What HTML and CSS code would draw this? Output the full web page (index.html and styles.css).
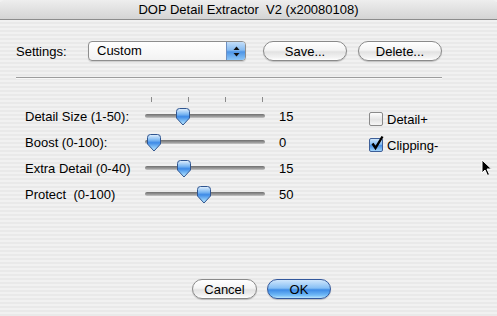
FILE: index.html
```html
<!DOCTYPE html>
<html lang="en">
<head>
    <meta charset="UTF-8">
    <title>DOP Detail Extractor</title>
    <link rel="stylesheet" href="styles.css">
</head>
<body>
    <div class="window">
        <div class="titlebar">DOP Detail Extractor&nbsp; V2 (x20080108)</div>

        <div class="content">
            <div class="settings-row">
                <span class="settings-label">Settings:</span>
                <div class="popup">
                    <span class="popup-text">Custom</span>
                    <span class="popup-arrows">
                        <svg width="7" height="11" viewBox="0 0 7 11">
                            <path d="M3.5 0.5 L6.5 4 L0.5 4 Z" fill="#111"/>
                            <path d="M0.5 7 L6.5 7 L3.5 10.5 Z" fill="#111"/>
                        </svg>
                    </span>
                </div>
                <button class="btn btn-save">Save...</button>
                <button class="btn btn-delete">Delete...</button>
            </div>

            <div class="separator"></div>

            <div class="params">
                <div class="sliders">
                    <div class="ticks-row">
                        <div class="ticks">
                            <span class="tick"></span>
                            <span class="tick"></span>
                            <span class="tick"></span>
                            <span class="tick"></span>
                        </div>
                    </div>

                    <div class="slider-row">
                        <span class="slider-label">Detail Size (1-50):</span>
                        <div class="track">
                            <svg class="thumb" style="left: 30px" width="16" height="18" viewBox="0 0 16 18"><use href="#thumb-shape"/></svg>
                        </div>
                        <span class="slider-value">15</span>
                    </div>
                    <div class="slider-row">
                        <span class="slider-label">Boost (0-100):</span>
                        <div class="track">
                            <svg class="thumb" style="left: 1px" width="16" height="18" viewBox="0 0 16 18"><use href="#thumb-shape"/></svg>
                        </div>
                        <span class="slider-value">0</span>
                    </div>
                    <div class="slider-row">
                        <span class="slider-label">Extra Detail (0-40)</span>
                        <div class="track">
                            <svg class="thumb" style="left: 31px" width="16" height="18" viewBox="0 0 16 18"><use href="#thumb-shape"/></svg>
                        </div>
                        <span class="slider-value">15</span>
                    </div>
                    <div class="slider-row">
                        <span class="slider-label">Protect&nbsp; (0-100)</span>
                        <div class="track">
                            <svg class="thumb" style="left: 51px" width="16" height="18" viewBox="0 0 16 18"><use href="#thumb-shape"/></svg>
                        </div>
                        <span class="slider-value">50</span>
                    </div>
                </div>

                <div class="checks">
                    <label class="check-row">
                        <span class="checkbox"></span>
                        <span class="check-text">Detail+</span>
                    </label>
                    <label class="check-row">
                        <span class="checkbox checked">
                            <svg class="checkmark" width="14" height="16" viewBox="0 0 14 16">
                                <path d="M2.5 8.5 L5.5 13 L12.5 1.5" fill="none" stroke="#000" stroke-width="2.4"/>
                            </svg>
                        </span>
                        <span class="check-text">Clipping-</span>
                    </label>
                </div>
            </div>

            <div class="actions">
                <button class="btn btn-cancel">Cancel</button>
                <button class="btn btn-ok">OK</button>
            </div>
        </div>

        <svg class="cursor" width="12" height="18" viewBox="0 0 12 18">
            <path d="M1 1 L1 14 L4 11 L6.5 16.5 L8.5 15.5 L6 10 L10.5 10 Z" fill="#000" stroke="#fff" stroke-width="1"/>
        </svg>

        <!-- shared slider thumb -->
        <svg width="0" height="0" class="defs">
            <defs>
                <linearGradient id="thumb-fill" x1="0" y1="0" x2="0" y2="1">
                    <stop offset="0" stop-color="#e4f1fd"/>
                    <stop offset="0.35" stop-color="#7ab6f2"/>
                    <stop offset="0.5" stop-color="#3d8ae6"/>
                    <stop offset="0.8" stop-color="#8cc8f8"/>
                    <stop offset="1" stop-color="#c9ecfd"/>
                </linearGradient>
                <path id="thumb-shape" d="M1.5 3.5 Q1.5 0.5 4.5 0.5 H11.5 Q14.5 0.5 14.5 3.5 V10 L8 17 L1.5 10 Z" fill="url(#thumb-fill)" stroke="#2f5590" stroke-width="1"/>
            </defs>
        </svg>
    </div>
</body>
</html>
```

FILE: styles.css
```css
body {
    margin: 0;
    font-family: "Liberation Sans", Arial, sans-serif;
    font-size: 13px;
    color: #000;
}

.window {
    position: relative;
    width: 497px;
    height: 316px;
    overflow: hidden;
    background: repeating-linear-gradient(to bottom, #f1f1f1 0, #f1f1f1 2px, #e9e9e9 2px, #e9e9e9 4px);
}

.titlebar {
    height: 19px;
    line-height: 20px;
    text-align: center;
    border-bottom: 1px solid #8c8c8c;
    border-radius: 5px 5px 0 0;
    background: linear-gradient(to bottom, #eeeeee, #d4d4d4);
}

.content {
    padding: 21px 0 0 16px;
}

/* settings row */
.settings-row {
    display: flex;
    align-items: center;
    height: 20px;
}

.settings-label {
    width: 72px;
}

.popup {
    display: flex;
    width: 156px;
    height: 18px;
    border: 1px solid #8e8e8e;
    border-radius: 4px;
    background: linear-gradient(to bottom, #ffffff, #f2f2f2);
    box-shadow: 0 1px 1px rgba(0, 0, 0, 0.15);
}

.popup-text {
    flex: 1;
    padding-left: 8px;
    line-height: 18px;
}

.popup-arrows {
    width: 18px;
    display: flex;
    align-items: center;
    justify-content: center;
    border-left: 1px solid #6d8fc2;
    border-radius: 0 3px 3px 0;
    background: linear-gradient(to bottom, #c3def9 0, #86bbf1 45%, #4e95e6 55%, #8cc6f8 100%);
}

.btn {
    height: 20px;
    padding: 0;
    border: 1px solid #8a8a8a;
    border-radius: 10px;
    font-family: inherit;
    font-size: 13px;
    color: #000;
    background: linear-gradient(to bottom, #ffffff 0, #f4f4f4 45%, #e2e2e2 55%, #f2f2f2 85%, #ffffff 100%);
    box-shadow: 0 1px 1px rgba(0, 0, 0, 0.2);
}

.btn-save {
    width: 84px;
    margin-left: 17px;
}

.btn-delete {
    width: 84px;
    margin-left: 11px;
}

.separator {
    width: 426px;
    height: 1px;
    margin-top: 16px;
    background: #9d9d9d;
    border-bottom: 1px solid #f8f8f8;
}

/* sliders */
.params {
    display: flex;
    margin-top: 18px;
}

.sliders {
    width: 304px;
    padding-left: 9px;
}

.ticks-row {
    height: 6px;
    padding-left: 120px;
}

.ticks {
    display: flex;
    justify-content: space-between;
    width: 112px;
    padding: 0 2px 0 6px;
}

.tick {
    width: 1px;
    height: 5px;
    background: #8a8a8a;
}

.slider-row {
    display: flex;
    align-items: center;
    height: 26px;
}

.slider-label {
    width: 120px;
}

.track {
    position: relative;
    width: 120px;
    height: 4px;
    border-radius: 2px;
    background: linear-gradient(to bottom, #6f6f6f, #9a9a9a 60%, #c8c8c8);
}

.thumb {
    position: absolute;
    top: -6px;
}

.slider-value {
    margin-left: 14px;
}

/* checkboxes */
.checks {
    padding-top: 9px;
    margin-left: 40px;
}

.check-row {
    display: flex;
    align-items: center;
    height: 26px;
}

.checkbox {
    position: relative;
    width: 12px;
    height: 12px;
    border: 1px solid #8a8a8a;
    border-radius: 2px;
    background: linear-gradient(to bottom, #fdfdfd, #e4e4e4 55%, #f6f6f6);
}

.checkbox.checked {
    border-color: #3e5f98;
    background: linear-gradient(to bottom, #cde5fb 0, #80b9f2 45%, #4790e6 55%, #a4d6fb 100%);
}

.checkmark {
    position: absolute;
    left: 0;
    top: -4px;
}

.check-text {
    margin-left: 4px;
}

/* bottom buttons */
.actions {
    display: flex;
    margin-top: 72px;
    padding-left: 176px;
}

.btn-cancel {
    width: 65px;
}

.btn-ok {
    width: 64px;
    margin-left: 10px;
    border-color: #33589c;
    background: linear-gradient(to bottom, #cfe6fc 0, #86bff5 45%, #3d8be6 55%, #72bbf7 85%, #b8e4fd 100%);
}

.cursor {
    position: absolute;
    left: 481px;
    top: 159px;
}

.defs {
    position: absolute;
}
```
